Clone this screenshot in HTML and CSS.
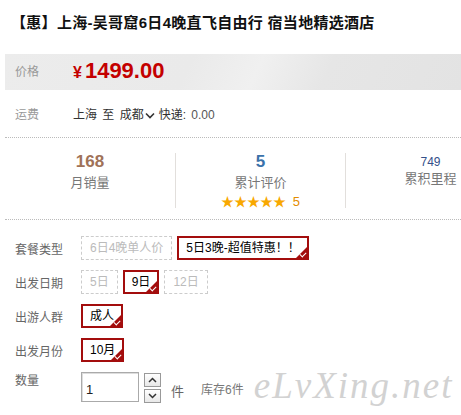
FILE: index.html
```html
<!DOCTYPE html>
<html lang="zh-CN">
<head>
    <meta charset="UTF-8">
    <meta name="viewport" content="width=device-width, initial-scale=1.0">
    <title>上海-吴哥窟6日4晚直飞自由行</title>
    <link rel="stylesheet" href="styles.css">
</head>
<body>
    <h1 class="title">【惠】上海-吴哥窟6日4晚直飞自由行 宿当地精选酒店</h1>

    <div class="detail">
        <div class="price-band">
            <span class="label">价格</span>
            <span class="price"><em>¥</em>1499.00</span>
        </div>

        <div class="freight">
            <span class="label">运费</span>
            <span class="route">上海 至 成都<svg class="chev" width="10" height="7" viewBox="0 0 10 7"><path d="M1 1.5 L5 5.5 L9 1.5" fill="none" stroke="#333" stroke-width="1.6"/></svg>快递: <span class="fee">0.00</span></span>
        </div>

        <div class="stats">
            <div class="stat">
                <div class="num sales">168</div>
                <div class="stat-label">月销量</div>
            </div>
            <div class="stat">
                <div class="num reviews">5</div>
                <div class="stat-label">累计评价</div>
                <div class="stars">★★★★★ <span>5</span></div>
            </div>
            <div class="stat">
                <div class="num miles">749</div>
                <div class="stat-label up">累积里程</div>
            </div>
        </div>

        <div class="options">
            <div class="opt-row">
                <span class="opt-label">套餐类型</span>
                <span class="choice">6日4晚单人价</span>
                <span class="choice sel">5日3晚-超值特惠！！</span>
            </div>
            <div class="opt-row">
                <span class="opt-label">出发日期</span>
                <span class="choice">5日</span>
                <span class="choice sel">9日</span>
                <span class="choice">12日</span>
            </div>
            <div class="opt-row">
                <span class="opt-label">出游人群</span>
                <span class="choice sel">成人</span>
            </div>
            <div class="opt-row">
                <span class="opt-label">出发月份</span>
                <span class="choice sel">10月</span>
            </div>
            <div class="qty-row">
                <span class="opt-label">数量</span>
                <input class="qty" type="text" value="1">
                <div class="spin">
                    <span class="spin-btn"><svg width="9" height="6" viewBox="0 0 9 6"><path d="M1 5 L4.5 1.5 L8 5" fill="none" stroke="#333" stroke-width="1.5"/></svg></span>
                    <span class="spin-btn"><svg width="9" height="6" viewBox="0 0 9 6"><path d="M1 1 L4.5 4.5 L8 1" fill="none" stroke="#333" stroke-width="1.5"/></svg></span>
                </div>
                <span class="unit">件</span>
                <span class="stock">库存6件</span>
                <span class="mark">eLvXing.net</span>
            </div>
        </div>
    </div>
</body>
</html>
```

FILE: styles.css
```css
* {
    margin: 0;
    padding: 0;
    box-sizing: border-box;
}

body {
    font-family: "Liberation Sans", "Noto Sans CJK SC", sans-serif;
    font-size: 12px;
    color: #333;
    background: #fff;
    overflow: hidden;
}

.title {
    font-size: 15px;
    font-weight: bold;
    line-height: 22px;
    color: #111;
    margin: 12px 0 20px;
    padding-left: 11px;
    letter-spacing: 0.3px;
    white-space: nowrap;
}

.detail {
    padding-left: 5px;
}

.label {
    display: inline-block;
    width: 68px;
    padding-left: 10px;
    color: #999;
}

/* price */
.price-band {
    display: flex;
    align-items: center;
    height: 36px;
    padding-bottom: 3px;
    background: linear-gradient(115deg, #ececec 0%, #eaeaea 40%, #f0f0f0 55%, #e6e6e6 70%, #e3e3e3 100%);
}

.price {
    font-size: 22px;
    font-weight: bold;
    color: #c40000;
}

.price em {
    font-style: normal;
    font-size: 16px;
    margin-right: 3px;
}

/* freight */
.freight {
    display: flex;
    align-items: center;
    height: 48px;
    border-bottom: 1px dotted #bbb;
}

.route {
    color: #333;
    word-spacing: 2px;
}

.chev {
    margin: 0 4px 1px 1px;
    vertical-align: middle;
}

.fee {
    color: #555;
}

/* stats */
.stats {
    display: flex;
    overflow: hidden;
    padding: 15px 0 11px;
    border-bottom: 1px dotted #bbb;
}

.stat {
    flex: 0 0 170px;
    height: 55px;
    text-align: center;
    border-left: 1px solid #e2dfdc;
}

.stat:first-child {
    border-left: none;
}

.num {
    line-height: 18px;
    font-size: 17px;
    font-weight: bold;
}

.sales {
    color: #a07258;
}

.reviews {
    color: #3b72aa;
}

.miles {
    font-size: 12px;
    font-weight: normal;
    color: #34508a;
}

.stat-label {
    line-height: 24px;
    font-size: 13px;
    color: #777;
}

.stat-label.up {
    margin-top: -4px;
}

.stars {
    line-height: 14px;
    font-size: 13px;
    color: #f8a800;
}

.stars span {
    color: #e38c00;
    margin-left: 3px;
}

/* sku options */
.options {
    padding: 16px 0 0 10px;
}

.opt-row {
    display: flex;
    align-items: center;
    height: 24px;
    margin-bottom: 10px;
}

.opt-label {
    flex: 0 0 66px;
    font-size: 12px;
    color: #666;
}

.choice {
    position: relative;
    height: 24px;
    line-height: 22px;
    padding: 0 8px;
    margin-right: 5px;
    border: 1px dashed #ccc;
    color: #bbb;
    white-space: nowrap;
}

.choice.sel {
    line-height: 20px;
    padding: 0 7px;
    border: 2px solid #a30d0d;
    color: #000;
}

.choice.sel::after {
    content: "";
    position: absolute;
    right: 0;
    bottom: 0;
    border-style: solid;
    border-width: 0 0 11px 11px;
    border-color: transparent transparent #a30d0d transparent;
}

.choice.sel::before {
    content: "";
    position: absolute;
    right: 1px;
    bottom: 2px;
    width: 5px;
    height: 3px;
    border-left: 1px solid #fff;
    border-bottom: 1px solid #fff;
    transform: rotate(-45deg);
    z-index: 1;
}

/* quantity */
.qty-row {
    display: flex;
    align-items: flex-start;
    height: 34px;
}

.qty-row .opt-label {
    line-height: 18px;
}

.qty {
    width: 58px;
    height: 30px;
    border: 1px solid #aaa;
    box-shadow: inset 1px 1px 0 #ddd;
    padding: 4px 0 0 4px;
    font-family: "Liberation Sans", sans-serif;
    font-size: 13px;
    color: #222;
    outline: none;
}

.spin {
    display: flex;
    flex-direction: column;
    gap: 2px;
    margin: 1px 0 0 5px;
}

.spin-btn {
    display: flex;
    align-items: center;
    justify-content: center;
    width: 17px;
    height: 14px;
    border: 1px solid #999;
    background: linear-gradient(#fff, #e8e8e8);
}

.unit {
    margin: 9px 0 0 10px;
    font-size: 13px;
    color: #666;
}

.stock {
    margin: 8px 0 0 17px;
    color: #777;
}

.mark {
    margin: -8px 0 0 10px;
    font-family: "Liberation Serif", serif;
    font-style: italic;
    font-size: 37px;
    letter-spacing: 2px;
    color: #d2d2d2;
    white-space: nowrap;
}
```
